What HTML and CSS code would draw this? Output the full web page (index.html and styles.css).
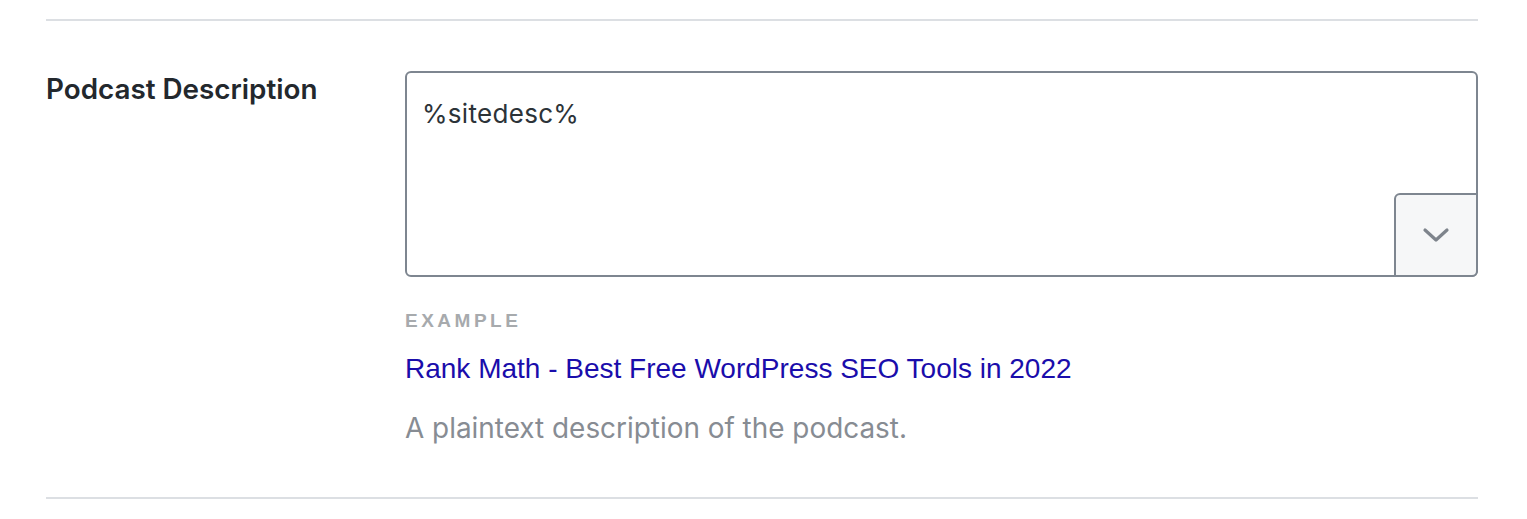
FILE: index.html
```html
<!DOCTYPE html>
<html>
<head>
<meta charset="utf-8">
<link rel="stylesheet" href="styles.css">
</head>
<body>
<div class="wrap">
  <div class="row">
    <div class="label">Podcast Description</div>
    <div class="field">
      <div class="textarea-box">
        <div class="ta-text">%sitedesc%</div>
        <button class="var-btn" type="button">
          <svg width="28" height="16" viewBox="0 0 28 16"><path d="M3 3 L14 13 L25 3" fill="none" stroke="#7e848c" stroke-width="3.2" stroke-linecap="round" stroke-linejoin="round"/></svg>
        </button>
      </div>
      <div class="example">EXAMPLE</div>
      <div class="ex-link">Rank Math - Best Free WordPress SEO Tools in 2022</div>
      <div class="desc">A plaintext description of the podcast.</div>
    </div>
  </div>
</div>
</body>
</html>
```
FILE: styles.css
```css
html, body { margin: 0; padding: 0; background: #fff; }
.wrap { padding: 19px 49px 0 46px; }
.row {
  border-top: 2px solid #dcdfe3;
  border-bottom: 2px solid #dcdfe3;
  display: flex;
  padding: 50px 0 53px 0;
}
.label {
  width: 359px;
  flex: none;
  font-family: Inter, "Noto Sans", sans-serif;
  font-weight: 600;
  font-size: 27.8px;
  color: #23282d;
  padding-top: 3px;
  line-height: 30px;
}
.field { flex: 1; }
.textarea-box {
  position: relative;
  height: 202px;
  border: 2px solid #7e8690;
  border-radius: 6px;
  box-sizing: content-box;
}
.ta-text {
  font-family: Inter, "Noto Sans", sans-serif;
  font-size: 26px;
  letter-spacing: 0.3px;
  color: #2c3338;
  padding: 26px 0 0 15px;
  line-height: 30px;
}
.var-btn {
  position: absolute;
  right: -2px;
  bottom: -2px;
  width: 84px;
  height: 84px;
  border: 2px solid #7e8690;
  border-radius: 6px 0 6px 0;
  background: #f6f7f8;
  display: flex;
  align-items: center;
  justify-content: center;
  padding: 0;
  box-sizing: border-box;
}
.example {
  margin-top: 33px;
  font-family: "Liberation Sans", Arial, sans-serif;
  font-weight: bold;
  font-size: 19px;
  letter-spacing: 3.5px;
  color: #a7aaad;
  line-height: 22px;
}
.ex-link {
  margin-top: 21px;
  font-family: "Liberation Sans", Arial, sans-serif;
  font-size: 28px;
  color: #1a0dab;
  line-height: 32px;
}
.desc {
  margin-top: 27px;
  font-family: Inter, "Noto Sans", sans-serif;
  font-size: 27.9px;
  color: #878c93;
  line-height: 32px;
}
```
